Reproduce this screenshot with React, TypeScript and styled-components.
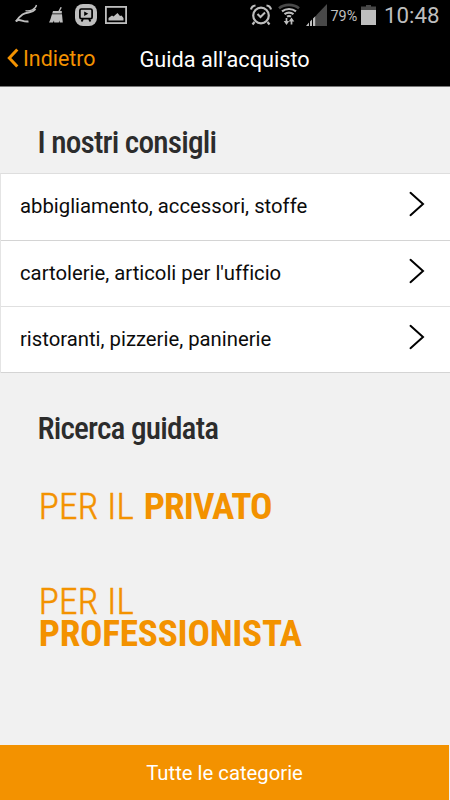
import React from 'react';
import styled, { createGlobalStyle } from 'styled-components';

const GlobalStyle = createGlobalStyle`
  *, *::before, *::after { box-sizing: border-box; }
  body { margin: 0; background: #f1f1f1; font-family: Roboto, sans-serif; font-variant-ligatures: none; }
  button { font: inherit; border: 0; background: none; padding: 0; cursor: pointer; }
`;

const Screen = styled.div`
  display: flex;
  flex-direction: column;
  width: 450px;
  height: 800px;
  overflow: hidden;
  background: #f1f1f1;
`;

const StatusBar = styled.div`
  display: flex;
  justify-content: space-between;
  height: 30px;
  background: #000;
  color: #bebebe;
  svg { display: block; flex: none; }
`;

const StatusGroup = styled.div`
  display: flex;
  align-items: center;
  height: 30px;
`;

const BatteryLevel = styled.span`
  width: 34px;
  padding-left: 3.5px;
  margin-top: 2px;
  font-size: 14.4px;
`;

const Clock = styled.span`
  width: 66px;
  font-size: 22.3px;
  line-height: 30px;
`;

const NavBar = styled.header`
  display: grid;
  grid-template-columns: 139.5px 1fr;
  height: 57px;
  background: #000;
  border-bottom: 1px solid #777;
`;

const BackButton = styled.button`
  display: flex;
  align-items: flex-start;
  gap: 4px;
  padding: 16px 0 0 7px;
  color: #f39200;
  font-size: 21.4px;
  line-height: 25px;
  svg { margin-top: 2px; }
`;

const NavTitle = styled.h1`
  margin: 0;
  padding-top: 17px;
  color: #fff;
  font-size: 21.7px;
  font-weight: 400;
  line-height: 25px;
`;

const SectionTitle = styled.h2`
  margin: 0;
  padding: 38px 0 0 37.5px;
  font-family: 'Roboto Condensed', Roboto, sans-serif;
  font-size: 31.3px;
  font-weight: 500;
  line-height: 36px;
  letter-spacing: -0.82px;
  color: #2c2c2c;
`;

const AdviceList = styled.ul`
  margin: 12px 0 0;
  padding: 0;
  list-style: none;
  background: #fff;
  border-top: 1px solid #dedede;
  border-left: 1px solid #e4e4e4;
`;

const AdviceRow = styled.li<{ $height: number; $line: string }>`
  display: flex;
  align-items: center;
  justify-content: space-between;
  height: ${(p) => p.$height}px;
  padding: 0 25.5px 2px 19px;
  border-bottom: 1px solid ${(p) => p.$line};
  color: #0c0c0c;
  font-size: 20.3px;
  svg { margin-bottom: 4px; }
`;

const GuidedSearch = styled.section`
  display: flex;
  flex-direction: column;
  flex: 1;
`;

const GuidedLink = styled.a<{ $gap: number }>`
  display: block;
  margin: ${(p) => p.$gap}px 0 0 38.7px;
  font-family: 'Roboto Condensed', Roboto, sans-serif;
  font-size: 37.3px;
  font-weight: 300;
  line-height: 32.5px;
  letter-spacing: 0.25px;
  color: #f39200;
  -webkit-text-stroke: 0.55px #f39200;
`;

const Strong = styled.strong<{ $block?: boolean }>`
  display: ${(p) => (p.$block ? 'block' : 'inline-block')};
  margin-left: ${(p) => (p.$block ? 0 : 1)}px;
  font-weight: 700;
  letter-spacing: ${(p) => (p.$block ? -0.25 : -0.95)}px;
  -webkit-text-stroke-width: 0;
`;

const AllCategories = styled.button`
  width: 449px;
  height: 55px;
  background: #f39200;
  color: #fff;
  font-size: 20.3px;
  text-align: center;
`;

const SwooshIcon = () => (
  <svg width="24" height="22" viewBox="0 0 24 22" fill="none" stroke="currentColor">
    <path d="M21.500 1C20.500 5.500 15 7.500 10.500 6.700" strokeWidth="1.300" />
    <path d="M20.500 5C17 9.500 12 7.500 7.500 10.500C4.500 12.500 3 14.500 1 17.500" strokeWidth="1.900" />
    <path d="M1 17.300C4 13.500 7.500 18.500 13.500 17.500" strokeWidth="2" />
  </svg>
);

const BroomIcon = () => (
  <svg width="15" height="16" viewBox="0 0 15 16" fill="currentColor">
    <path d="M11.500 0L12.800 .5L10.500 5L9.200 4.500Z" />
    <path d="M4 4H12.800V6.500H3.200Z" />
    <path d="M3 7.300H13L13.800 15.500H10.700L10.500 13.500L9.800 15.500H5.200L5 13.500L4 15.500H0C1.500 13 2 10 3 7.300Z" />
  </svg>
);

const PlayerIcon = () => (
  <svg width="22" height="22" viewBox="0 0 22 22">
    <rect width="22" height="22" rx="8" fill="currentColor" />
    <rect x="4.900" y="5" width="12.200" height="9.700" rx="1.500" fill="none" stroke="#000" strokeWidth="1.700" />
    <path d="M9.200 7.500V12.100L13.300 9.800Z" fill="#000" />
    <path d="M8 15L6.500 17.500M14 15L15.500 17.500" stroke="#000" strokeWidth="1.800" />
  </svg>
);

const PictureIcon = () => (
  <svg width="22" height="18" viewBox="0 0 22 18" fill="currentColor">
    <rect x=".9" y=".9" width="20.200" height="16.200" fill="none" stroke="currentColor" strokeWidth="1.800" />
    <path d="M3.500 14.500V12L7 9.500L8.500 10.500L12.500 7L15 10L16.500 9.500L18.500 12V14.500Z" />
  </svg>
);

const AlarmIcon = () => (
  <svg width="22" height="22" viewBox="0 0 22 22" fill="none" stroke="currentColor" strokeWidth="2.200">
    <circle cx="11" cy="11.500" r="7.800" />
    <path d="M7.500 10L10.500 13L15 8.500" strokeWidth="2" />
    <path d="M1 5.500C1.500 3 3 1.700 5.500 1.500M16.500 1.500C19 1.700 20.500 3 21 5.500" />
    <path d="M4.500 18L2.500 20.500M17.500 18L19.500 20.500" />
  </svg>
);

const WifiIcon = () => (
  <svg width="22" height="23" viewBox="0 0 22 23" fill="none" stroke="currentColor" strokeWidth="2.200">
    <path d="M1 5.300C6.500.7 15.500.7 21 5.300" stroke="#484848" strokeWidth="2.600" />
    <path d="M4 8.300C8 5.200 14 5.200 18 8.300M6.500 11.200C9.200 9.200 12.800 9.200 15.500 11.200" />
    <path d="M9 13.600Q11 12.400 13 13.600" />
    <path d="M8.500 15V19M13.500 21.500V17.500" strokeWidth="1.700" />
    <path d="M5.700 18H11.300L8.500 22ZM10.700 18.500H16.300L13.500 14.500Z" fill="currentColor" stroke="none" />
  </svg>
);

const SignalIcon = () => (
  <svg width="21" height="22" viewBox="0 0 21 22">
    <path d="M10 11.500L21 0V22H10Z" fill="#484848" />
    <path d="M0 22L3 18.500V22ZM4 22V17.500L6 15.500V22ZM7 22V14.500L9.500 12V22Z" fill="currentColor" />
  </svg>
);

const BatteryIcon = () => (
  <svg width="15" height="20" viewBox="0 0 15 20">
    <path d="M5 0H10V1.500H15V6H0V1.500H5Z" fill="#484848" />
    <path d="M0 5H15V20H0Z" fill="currentColor" />
  </svg>
);

const BackIcon = () => (
  <svg width="12" height="20" viewBox="0 0 12 20" fill="none" stroke="currentColor" strokeWidth="3">
    <path d="M10.300 1.500L2.300 10L10.300 18.500" />
  </svg>
);

const ChevronIcon = () => (
  <svg width="16" height="26" viewBox="0 0 16 26" fill="none" stroke="#000" strokeWidth="2">
    <path d="M1.500 1.800L14 13L1.500 24.200" strokeLinecap="round" />
  </svg>
);

const LeftIcons = styled(StatusGroup)`
  padding-left: 15px;
  svg:nth-child(2) { margin-left: 10px; }
  svg:nth-child(3) { margin-left: 11px; }
  svg:nth-child(4) { margin-left: 8px; }
`;

const RightIcons = styled(StatusGroup)`
  svg:nth-of-type(2) { margin-left: 6px; margin-top: -1px; }
  svg:nth-of-type(3) { margin-left: 6px; }
  svg:nth-of-type(4) { margin-top: -1px; margin-right: 8px; }
`;

const advice = [
  { label: 'abbigliamento, accessori, stoffe', height: 67, line: '#d4d4d4' },
  { label: "cartolerie, articoli per l'ufficio", height: 66, line: '#e0e0e0' },
  { label: 'ristoranti, pizzerie, paninerie', height: 66, line: '#d4d4d4' },
];

export default function App() {
  return (
    <>
      <GlobalStyle />
      <Screen>
        <StatusBar>
          <LeftIcons>
            <SwooshIcon />
            <BroomIcon />
            <PlayerIcon />
            <PictureIcon />
          </LeftIcons>
          <RightIcons>
            <AlarmIcon />
            <WifiIcon />
            <SignalIcon />
            <BatteryLevel>79%</BatteryLevel>
            <BatteryIcon />
            <Clock>10:48</Clock>
          </RightIcons>
        </StatusBar>
        <NavBar>
          <BackButton><BackIcon />Indietro</BackButton>
          <NavTitle>Guida all'acquisto</NavTitle>
        </NavBar>
        <SectionTitle>I nostri consigli</SectionTitle>
        <AdviceList>
          {advice.map((a) => (
            <AdviceRow key={a.label} $height={a.height} $line={a.line}>
              {a.label}
              <ChevronIcon />
            </AdviceRow>
          ))}
        </AdviceList>
        <GuidedSearch>
          <SectionTitle>Ricerca guidata</SectionTitle>
          <GuidedLink $gap={43}>PER IL <Strong>PRIVATO</Strong></GuidedLink>
          <GuidedLink $gap={62}>PER IL <Strong $block>PROFESSIONISTA</Strong></GuidedLink>
        </GuidedSearch>
        <AllCategories>Tutte le categorie</AllCategories>
      </Screen>
    </>
  );
}
